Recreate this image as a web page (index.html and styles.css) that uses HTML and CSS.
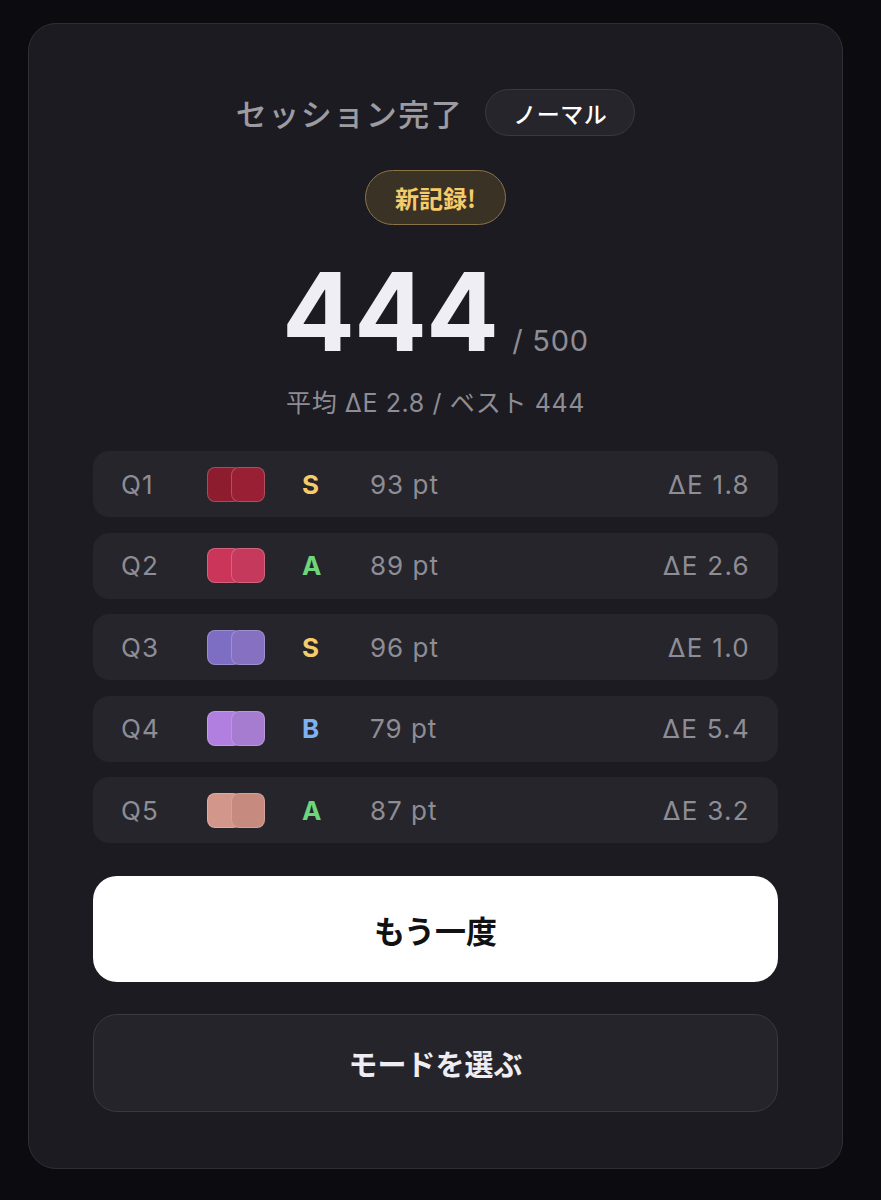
FILE: index.html
```html
<!DOCTYPE html>
<html lang="ja">
<head>
<meta charset="utf-8">
<title>セッション完了</title>
<link rel="stylesheet" href="styles.css">
</head>
<body>
<main class="card">
  <div class="head">
    <h1 class="title">セッション完了</h1>
    <span class="mode">ノーマル</span>
  </div>
  <div class="record">新記録!</div>
  <div class="score">
    <span class="score-num">444</span>
    <span class="score-max">/ 500</span>
  </div>
  <p class="summary">平均 ΔE 2.8 / ベスト 444</p>

  <ul class="rows">
    <li class="row">
      <span class="q">Q1</span>
      <span class="sw"><span class="sq" style="background:#8c1c2e"></span><span class="sq" style="background:#981f34"></span></span>
      <span class="grade g-s">S</span>
      <span class="pt">93 pt</span>
      <span class="de">ΔE 1.8</span>
    </li>
    <li class="row">
      <span class="q">Q2</span>
      <span class="sw"><span class="sq" style="background:#ca3559"></span><span class="sq" style="background:#c5395c"></span></span>
      <span class="grade g-a">A</span>
      <span class="pt">89 pt</span>
      <span class="de">ΔE 2.6</span>
    </li>
    <li class="row">
      <span class="q">Q3</span>
      <span class="sw"><span class="sq" style="background:#7d6ec3"></span><span class="sq" style="background:#8570c2"></span></span>
      <span class="grade g-s">S</span>
      <span class="pt">96 pt</span>
      <span class="de">ΔE 1.0</span>
    </li>
    <li class="row">
      <span class="q">Q4</span>
      <span class="sw"><span class="sq" style="background:#b07fe0"></span><span class="sq" style="background:#a57ccf"></span></span>
      <span class="grade g-b">B</span>
      <span class="pt">79 pt</span>
      <span class="de">ΔE 5.4</span>
    </li>
    <li class="row">
      <span class="q">Q5</span>
      <span class="sw"><span class="sq" style="background:#d3968b"></span><span class="sq" style="background:#c78a7e"></span></span>
      <span class="grade g-a">A</span>
      <span class="pt">87 pt</span>
      <span class="de">ΔE 3.2</span>
    </li>
  </ul>

  <button class="btn btn-primary">もう一度</button>
  <button class="btn btn-secondary">モードを選ぶ</button>
</main>
</body>
</html>
```
FILE: styles.css
```css
* { box-sizing: border-box; }
html, body { margin: 0; padding: 0; }
body {
  background: #0c0c10;
  font-family: Inter, "Noto Sans CJK JP", sans-serif;
  color: #eeedf3;
  width: 881px;
  min-height: 1200px;
  padding-top: 23px;
  padding-left: 28px;
}
.card {
  width: 815px;
  height: 1146px;
  background: #1c1b21;
  border: 1px solid #302f36;
  border-radius: 28px;
  padding: 65px 64px 0;
  display: flex;
  flex-direction: column;
  align-items: center;
}
.head {
  display: flex;
  align-items: center;
  gap: 22px;
  height: 47px;
}
.title {
  margin: 0;
  font-family: "Noto Sans CJK JP", sans-serif;
  font-size: 31px;
  font-weight: 500;
  letter-spacing: 1.5px;
  color: #9c9ba2;
}
.mode {
  height: 47px;
  padding: 0 27px;
  border: 1.5px solid #3a3940;
  border-radius: 24px;
  background: #26252b;
  display: flex;
  align-items: center;
  font-family: "Noto Sans CJK JP", sans-serif;
  font-size: 23px;
  font-weight: 500;
  letter-spacing: 0.5px;
  color: #ffffff;
}
.record {
  margin-top: 34px;
  height: 55px;
  padding: 0 29px;
  border: 1.5px solid #8a7347;
  border-radius: 28px;
  background: #3a3224;
  display: flex;
  align-items: center;
  font-family: "Noto Sans CJK JP", sans-serif;
  font-size: 24px;
  font-weight: 700;
  color: #f6cb6a;
}
.score {
  margin-top: 31px;
  height: 112px;
  display: flex;
  align-items: baseline;
  gap: 14px;
}
.score-num {
  font-size: 108px;
  line-height: 112px;
  font-weight: 700;
  color: #efeef4;
  letter-spacing: -1px;
}
.score-max {
  font-size: 29px;
  font-weight: 400;
  letter-spacing: 0.8px;
  color: #8e8d95;
}
.summary {
  margin: 20px 0 0;
  height: 30px;
  line-height: 30px;
  font-size: 25px;
  letter-spacing: 0.6px;
  color: #8e8d95;
}
.rows {
  list-style: none;
  margin: 33px 0 0;
  padding: 0;
  width: 100%;
  display: flex;
  flex-direction: column;
  gap: 15.5px;
}
.row {
  height: 66px;
  background: #26252b;
  border-radius: 16px;
  padding: 0 28px;
  display: flex;
  align-items: center;
  font-size: 26px;
  letter-spacing: 1px;
  color: #8e8d95;
}
.q { width: 86px; }
.sw { display: flex; width: 58px; }
.sq {
  width: 34px;
  height: 35px;
  border-radius: 8px;
  border: 1.5px solid rgba(255, 255, 255, 0.22);
}
.sq + .sq { margin-left: -10px; }
.grade {
  width: 68px;
  margin-left: 37px;
  font-weight: 700;
  letter-spacing: 0;
}
.g-s { color: #f6cb6a; }
.g-a { color: #6fd57c; }
.g-b { color: #7db1f2; }
.de { margin-left: auto; letter-spacing: 1.3px; }
.btn {
  width: 100%;
  font-family: "Noto Sans CJK JP", sans-serif;
  font-weight: 700;
  border-radius: 24px;
  cursor: pointer;
}
.btn-primary {
  margin-top: 33px;
  height: 106px;
  background: #ffffff;
  border: none;
  color: #111114;
  font-size: 31px;
}
.btn-secondary {
  margin-top: 32px;
  height: 98px;
  background: #25242b;
  border: 1.5px solid #3a3940;
  color: #eeedf3;
  font-size: 29px;
}
```
